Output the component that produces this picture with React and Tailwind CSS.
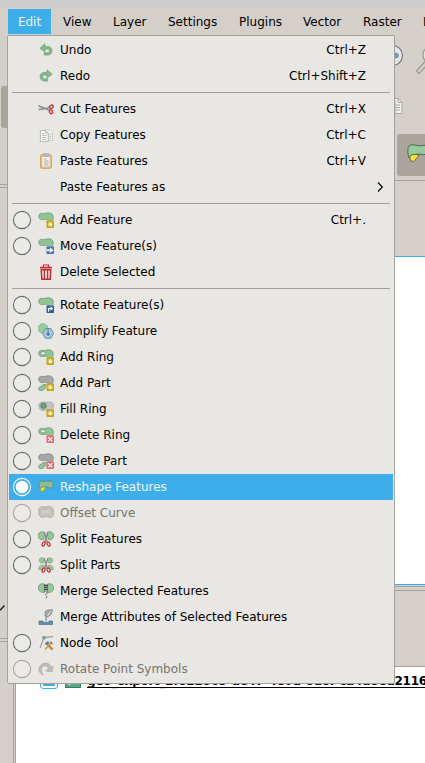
import React from "react";

const MENUS = [
  ["View", "w-[50px]"], ["Layer", "w-[55px]"], ["Settings", "w-[71px]"], ["Plugins", "w-[64px]"],
  ["Vector", "w-[60px]"], ["Raster", "w-[60px]"], ["Database", "w-[78px]"],
];

function Blob({ fill = "#8fc494", stroke = "#6d9372" }) {
  return <path d="M.7 4.100C.7 1.700 2.800.9 5.200 1.400c2 .4 3.500-.8 6-.6 3 .2 4.200 2.200 4.100 4.800-.1 2.500-1.400 3.900-3.400 3.700-2.200-.2-2.200-2-4.300-2-1.800 0-2.500.5-4.200.3C1.600 7.300.7 6.100.7 4.100z" fill={fill} stroke={stroke} strokeWidth=".7" />;
}

function Badge({ kind }) {
  if (kind === "star") return (
    <g><rect x="8.500" y="8.500" width="7.500" height="7.500" rx=".7" fill="#c8a414" />
      <path d="M12.250 9.700v5.100M9.700 12.250h5.100M10.500 10.500l3.500 3.500M14 10.500l-3.500 3.500" stroke="#fffbe0" strokeWidth=".9" /></g>
  );
  if (kind === "cross") return (
    <g><rect x="8.500" y="8.500" width="7.500" height="7.500" rx=".7" fill="#dc6c72" />
      <path d="M10.200 10.200l4.100 4.100M14.300 10.200l-4.100 4.100" stroke="#fff" strokeWidth="1.200" /></g>
  );
  if (kind === "arrow") return (
    <g><rect x="8.500" y="8.500" width="7.500" height="7.500" rx=".7" fill="#4a72ad" />
      <path d="M8.800 11.200h3.200V9.200l3.600 3-3.600 3v-2H8.800z" fill="#e9f1fb" /></g>
  );
  return (
    <g><rect x="8.500" y="8.500" width="7.500" height="7.500" rx=".7" fill="#2f5ea3" />
      <path d="M10.500 14.800v-3.200h3M12.500 10l1.800 1.600-1.800 1.600" fill="none" stroke="#fff" strokeWidth="1.100" /></g>
  );
}

function PartShapes() {
  return (
    <g>
      <Blob fill="#a5a7a4" stroke="#808080" />
      <path d="M7.500 9.300c.4 3.700-1.300 6.300-4.300 6.300-3 0-3.300-2.700-1-3.900 1.800-.8 2.600-2.600 5.300-2.400z" fill="#8fc494" stroke="#648568" strokeWidth=".7" />
    </g>
  );
}

function Wings() {
  return (
    <g fill="#93ca98" stroke="#648568" strokeWidth=".7">
      <path d="M7 1.600C4.500-.1.500.7.400 4.300c-.1 3.700 2.800 5.200 5.300 4z" />
      <path d="M9 1.600c2.500-1.700 6.500-.9 6.600 2.700.1 3.700-2.800 5.200-5.300 4z" />
    </g>
  );
}

function RedBlades() {
  return (
    <g fill="none">
      <path d="M6.200 1.500l2.900 9M9.800 1.500l-2.900 9" stroke="#858585" strokeWidth="1.200" />
      <ellipse cx="5.600" cy="13" rx="1.300" ry="2.300" transform="rotate(25 5.600 13)" stroke="#c22b35" strokeWidth="1.200" />
      <ellipse cx="10.600" cy="13" rx="1.300" ry="2.300" transform="rotate(-25 10.600 13)" stroke="#c22b35" strokeWidth="1.200" />
    </g>
  );
}

const undoShape = "M1.800 6.200L7 1.800V4.500h2.700c2.600 0 4.300 1.700 4.300 4.200 0 2.700-2 4.400-5 4.400H6.300v-2.300H9c1.500 0 2.400-.7 2.400-1.900 0-1.200-.8-1.800-2-1.800H7v3z";

const ICONS = {
  undo: <path d={undoShape} fill="#85b98a" stroke="#6fa274" strokeWidth=".7" />,
  redo: <path d={undoShape} transform="translate(16 0) scale(-1 1)" fill="#85b98a" stroke="#6fa274" strokeWidth=".7" />,
  cut: (
    <g fill="none">
      <path d="M.5 4.700l10.500 4.400M.5 8.700l10.500-2" stroke="#8b8b89" strokeWidth="1.500" />
      <ellipse cx="13.300" cy="5.700" rx="2" ry="1.500" transform="rotate(-25 13.300 5.700)" stroke="#bf3e46" strokeWidth="1.400" />
      <ellipse cx="13" cy="10.800" rx="1.500" ry="2" transform="rotate(-20 13 10.800)" stroke="#bf3e46" strokeWidth="1.400" />
    </g>
  ),
  copy: (
    <g strokeWidth=".8">
      <path d="M7 2.500h5l2.500 2.500v8.500H7z" fill="#efefed" stroke="#c8c8c6" />
      <path d="M2.400 3.500h5.200l2.700 2.700v8.300H2.400z" fill="#f7f7f5" stroke="#aaa" />
      <path d="M7.600 3.500v2.700h2.700M4 6.500h2.500M4 8.500h4.700M4 10.500h4.700M4 12.500h4.700M11.500 7.500h1.800M11.500 9.500h1.800M11.500 11.500h1.800" fill="none" stroke="#b0b0ae" />
    </g>
  ),
  paste: (
    <g>
      <rect x="2.600" y="1.800" width="10.800" height="13.500" rx=".7" fill="#dec18a" stroke="#cda666" />
      <path d="M4.400 3.500h7.200v10H4.400z" fill="#f6f5f2" />
      <rect x="5.200" y=".8" width="5.600" height="2.600" fill="#bdb9b0" stroke="#999" strokeWidth=".5" />
      <path d="M6 6h2.500M6 8h4.500M6 10h4.500M6 12h4.500" stroke="#a7a7a7" />
    </g>
  ),
  add: <g><Blob /><Badge kind="star" /></g>,
  move: <g><Blob /><Badge kind="arrow" /></g>,
  trash: (
    <g fill="none" stroke="#c32b2f">
      <path d="M2 3.600h12" strokeWidth="1.700" /><path d="M5.500 3V1h5v2" strokeWidth="1.100" />
      <path d="M3.300 5.800h9.400l-.5 9.400H3.800z" strokeWidth="1.500" />
      <path d="M6.400 6v9M9.600 6v9" strokeWidth="1.300" />
    </g>
  ),
  rotate: <g><Blob /><Badge kind="turn" /></g>,
  simplify: (
    <g>
      <path d="M.6 5.200C.2 2 2.800.4 5.500.8c3 .4 5 3 4 5.700-1 2.800-4.700 4.500-7.100 3C.4 8.200 1 7 .6 5.200z" fill="#98cf9d" stroke="#73a878" strokeWidth=".8" />
      <path d="M7.300 5.500h5.600l2.700 4.900-2.700 4.900H7.300L4.600 10.400z" fill="#a6c8df" stroke="#53809f" strokeWidth=".8" />
      <path d="M10.100 6v5.500M9 10.500h2.200l-1.100 2.200z" stroke="#376485" strokeWidth=".8" fill="#376485" />
    </g>
  ),
  ring: <g><Blob /><ellipse cx="5" cy="4.300" rx="2.500" ry="1.700" fill="#f0f1ed" stroke="#648568" strokeWidth=".7" /><Badge kind="star" /></g>,
  part: <g><PartShapes /><Badge kind="star" /></g>,
  fill: (
    <g>
      <path d="M1 5C.6 2 3 .8 5.500 1.200h7c2.600 0 3 1.700 2.800 4.300-.1 2.500-1 4-3.200 3.700-2-.4-4-.7-6 .1C3 10.300 1.300 8.300 1 5z" fill="#c3c4c1" stroke="#999" strokeWidth=".7" />
      <circle cx="5.500" cy="4.800" r="2.800" fill="#69a477" stroke="#53735a" strokeWidth=".7" /><Badge kind="star" />
    </g>
  ),
  deleteRing: <g><Blob /><ellipse cx="5" cy="4.300" rx="2.500" ry="1.700" fill="#f0f1ed" stroke="#648568" strokeWidth=".7" /><Badge kind="cross" /></g>,
  deletePart: <g><PartShapes /><Badge kind="cross" /></g>,
  reshape: (
    <g>
      <path d="M1.800 8.300l4-1 2.400.7-3.200 4.300H3z" fill="#f2dd37" stroke="#9d8e22" strokeWidth=".6" />
      <path d="M.7 5.300C.7 2.500 2.600 1.600 5 2.300c2.500.6 4-.6 6.700-.4 2.800.2 3.900 1.900 3.700 4.300-.2 2.300-1.700 3.200-3.700 2.800-1.900-.5-2.800-1.500-4.700-1.100-1.700.2-3.600-.2-4.600 1.600C1.400 9 .7 7.600.7 5.300z" fill="#86bd96" stroke="#597c64" strokeWidth=".7" />
    </g>
  ),
  offset: (
    <g fill="#cbc7c0" stroke="#aaa69f" strokeWidth=".9">
      <path d="M.7 6C.7 2 3 1.300 6 2c2 .4 3-.7 5.500-.5 3 .2 4 2.500 4 6 0 3.700-1.800 5.800-4 5-1.500-.5-2.500-1.500-5-.7-3.300 1-5.800.2-5.800-5.800z" />
      <path d="M3 6c.2-2 2-2 4-1.500 2 .3 3-.7 4.500-.4 2 .4 1.800 5.600-.3 5.400-1.500-.2-3-1.200-5-.5C4 9.700 2.700 9 3 6z" fill="#d3cfc8" strokeWidth=".5" />
    </g>
  ),
  split: <g><Wings /><RedBlades /></g>,
  splitParts: (
    <g>
      <g fill="#93ca98" stroke="#7b9a7f" strokeWidth=".6">
        <path d="M6.500 1.500C4-.1 1.300.8 1.300 3.300c0 2.500 2 3.300 4.500 2.400zM9.500 1.500c2.500-1.600 5.200-.7 5.200 1.800 0 2.500-2 3.300-4.500 2.400z" />
        <path d="M5.800 8.200C6 11.500 4.300 13.600.7 12.500c-.3-3 1.500-4.700 5.100-4.300zM10.200 8.200c-.2 3.300 1.500 5.400 5.100 4.300.3-3-1.500-4.700-5.100-4.300z" />
      </g>
      <RedBlades />
    </g>
  ),
  merge: (
    <g>
      <path d="M7.500 1.600C4.500-.1.500.7.400 4.600c-.1 4 3.600 5.700 6.800 4.300zM8.500 1.600c3-1.700 7-.9 7.100 3 .1 4-3.600 5.700-6.800 4.300z" fill="#93ca98" stroke="#648568" strokeWidth=".7" />
      <path d="M6.300 1v8.500M9.700 1v8.500" stroke="#777" strokeWidth=".8" />
      <path d="M6 2.500h4M6 4.500h4M6 6.500h4" stroke="#414b43" strokeWidth="1" />
      <path d="M8 9c3 1 1.500 2-.5 2.200-1.500.5 1.500 1.500 1.500 2.600L8 15.600" fill="none" stroke="#888" strokeWidth="1" />
    </g>
  ),
  mergeAttrs: (
    <g>
      <path d="M7.300 2.500L9.500 1l5-.3L13 5.500 9.500 8 7 7z" fill="#aaaaa7" stroke="#777" strokeWidth=".7" />
      <path d="M13 1.800L9.500 7" stroke="#ddd" /><path d="M8 7.500v4.500" stroke="#888" strokeWidth="1.200" />
      <path d="M1 12h4v1.300h6V12h3.500v3.500H1z" fill="#648cac" stroke="#416482" strokeWidth=".6" />
    </g>
  ),
  node: (
    <g>
      <path d="M2 13L6 2.500l9-.8" fill="none" stroke="#858583" strokeWidth=".9" />
      <path d="M4.800 1.500h2.500V4H4.800z" fill="#87bd8c" stroke="#648568" strokeWidth=".6" />
      <path d="M7 14.500l6-6" stroke="#d2a04c" strokeWidth="1.700" /><path d="M10 10l4.600 4.600" stroke="#c78630" strokeWidth="2.200" />
      <path d="M7 8.500l3-2 1.300 1.300L9 10.200zM12.700 6.200v2.300H15" fill="#777" stroke="#777" strokeWidth=".7" />
    </g>
  ),
  rotateSymbols: (
    <path d="M5.500 14C1.500 12.800.3 9.800 1 7 2 3.600 4.700 2 7.600 2c2.900 0 4.800 1.500 5.300 4l2.400-.5-1.300 5.500-6.300-1L10.300 7.800C9.800 5.800 8.600 4.700 7.200 4.700 5 4.800 3.500 6.300 3.500 8.800c0 2.200.8 4 2 5.200z" fill="#bebbb5" stroke="#aeaaa4" strokeWidth=".6" />
  ),
};

const GROUPS = [
  [
    { label: "Undo", icon: "undo", keys: "Ctrl+Z" },
    { label: "Redo", icon: "redo", keys: "Ctrl+Shift+Z" },
  ],
  [
    { label: "Cut Features", icon: "cut", keys: "Ctrl+X" },
    { label: "Copy Features", icon: "copy", keys: "Ctrl+C" },
    { label: "Paste Features", icon: "paste", keys: "Ctrl+V" },
    { label: "Paste Features as", submenu: true },
  ],
  [
    { label: "Add Feature", icon: "add", radio: true, keys: "Ctrl+." },
    { label: "Move Feature(s)", icon: "move", radio: true },
    { label: "Delete Selected", icon: "trash" },
  ],
  [
    { label: "Rotate Feature(s)", icon: "rotate", radio: true },
    { label: "Simplify Feature", icon: "simplify", radio: true },
    { label: "Add Ring", icon: "ring", radio: true },
    { label: "Add Part", icon: "part", radio: true },
    { label: "Fill Ring", icon: "fill", radio: true },
    { label: "Delete Ring", icon: "deleteRing", radio: true },
    { label: "Delete Part", icon: "deletePart", radio: true },
    { label: "Reshape Features", icon: "reshape", radio: true, active: true },
    { label: "Offset Curve", icon: "offset", radio: true, disabled: true },
    { label: "Split Features", icon: "split", radio: true },
    { label: "Split Parts", icon: "splitParts", radio: true },
    { label: "Merge Selected Features", icon: "merge" },
    { label: "Merge Attributes of Selected Features", icon: "mergeAttrs" },
    { label: "Node Tool", icon: "node", radio: true },
    { label: "Rotate Point Symbols", icon: "rotateSymbols", radio: true, disabled: true },
  ],
];

function Radio({ active, disabled }) {
  return (
    <svg viewBox="0 0 20 20" className="size-5">
      <circle cx="10" cy="10" r="8.600" fill={active ? "none" : "#ebeae7"} stroke={active ? "#fff" : disabled ? "#aaa8a4" : "#6b6b6a"} strokeWidth="1.100" />
      {active && <circle cx="10" cy="10" r="6.300" fill="#fff" />}
    </svg>
  );
}

function Item({ label, icon, keys, radio, submenu, active, disabled }) {
  const color = active ? "bg-[#3daee9] text-[#eff6fa]" : disabled ? "text-[#77736e]" : "text-black";
  return (
    <div className={`flex h-[26px] items-center pl-[3px] ${color}`}>
      <div className="w-5 shrink-0">{radio && <Radio active={active} disabled={disabled} />}</div>
      <svg viewBox="0 0 16 16" className="ml-1.5 size-4 shrink-0">{ICONS[icon]}</svg>
      <span className="ml-1.5 flex-1 whitespace-nowrap">{label}</span>
      {keys && <span className="mr-[27px]">{keys}</span>}
      {submenu && <svg viewBox="0 0 8 12" className="mr-[9px] h-3 w-2"><path d="M2 1.500L6.300 6 2 10.500" fill="none" stroke="#111" strokeWidth="1.300" /></svg>}
    </div>
  );
}

function EditMenu() {
  return (
    <div className="absolute left-[7px] top-[35px] w-[388px] rounded-[2px] border border-[#a5a29d] bg-[#e8e7e3] p-px">
      {GROUPS.map((group, i) => (
        <div key={i}>
          {i > 0 && <div className="mx-[3px] mb-[3px] mt-[3px] h-px bg-[#a5a29d]" />}
          {group.map((item) => <Item key={item.label} {...item} />)}
        </div>
      ))}
    </div>
  );
}

function LeftEdge() {
  return (
    <div className="flex w-4 shrink-0 flex-col border-r border-[#a5a29d] pr-px">
      <div className="flex flex-1 flex-col border-r border-[#a5a29d]">
        <div className="ml-px mt-[51px] h-[42px] rounded-[3px] bg-[#a9a59d]" />
        <div className="mt-14 h-1 border-y border-[#a5a29d]" />
        <svg viewBox="0 0 8 10" className="mt-[414px] h-2.5 w-2"><path d="M0 8.200L4.500 3.500" stroke="#111" strokeWidth="1.300" /></svg>
        <div className="mt-[26px] h-1 border-y border-[#a5a29d]" />
      </div>
    </div>
  );
}

function Workspace() {
  return (
    <div className="flex min-w-0 flex-1 flex-col">
      <div className="flex h-[53px] shrink-0 items-start pl-[366px] pt-2">
        <svg viewBox="0 0 24 24" className="size-6 shrink-0">
          <circle cx="10.500" cy="12.500" r="10" fill="#e5e6e7" stroke="#77797b" strokeWidth="1.200" />
          <rect x="4" y="10" width="12.500" height="5" rx="2.500" fill="#6f99c4" stroke="#5f86b0" strokeWidth=".6" />
        </svg>
        <svg viewBox="0 0 19 40" className="h-10 w-[19px] shrink-0">
          <circle cx="26" cy="12" r="9" fill="#e4e3df" stroke="#9b9892" strokeWidth="1.200" />
          <path d="M19 18.500L10.500 28l2.500 2.700 8-8.700" fill="#d4cfc8" stroke="#9b9892" strokeWidth="1.200" />
        </svg>
      </div>
      <div className="h-[46px] shrink-0 pl-[370px] pt-[9px]">
        <svg viewBox="0 0 18 22" className="h-[22px] w-[18px]">
          <path d="M5 1.500h7l4 4v11H5z" fill="#efefed" stroke="#aaa" />
          <path d="M12 1.500v4h4M8 8h6M8 10.500h6M8 13h6" fill="none" stroke="#aaa" /><path d="M0 3h9v16H0z" fill="#fff" stroke="#aaa" />
        </svg>
      </div>
      <div className="h-[46px] shrink-0 pl-[381px]">
        <div className="h-[42px] w-[44px] rounded-[3px] bg-[#a9a59d] pl-2.5 pt-[9px]">
          <svg viewBox="0 0 24 24" className="size-6">
            <path d="M2 12l6-1 4 1.500-5.300 6-3-.8z" fill="#f6e33a" stroke="#555" strokeWidth=".8" />
            <path d="M.8 7.500c0-5 3.200-6.500 7-5.500 4 1.200 7 .5 11 .2 5 0 6 9.300 0 9.300-5 .3-7-.8-10-.3-3 .8-5-.2-6.500 3.800C1.200 13 .8 10.500.8 7.500z" fill="#95cc9b" stroke="#4d6552" />
          </svg>
        </div>
      </div>
      <div className="h-[76px] shrink-0 border-t border-[#a5a29d]" />
      <div className="h-[329px] shrink-0 border-y border-[#3daee9] bg-white" />
      <div className="mt-px h-[5px] shrink-0 border-y border-[#a5a29d]" />
      <div className="h-[76px] shrink-0 border-b border-[#a5a29d]" />
      <div className="flex flex-1 items-start overflow-hidden bg-white pl-6 pt-1">
        <div className="size-[18px] shrink-0 rounded-[3px] border border-[#3daee9] p-0.5"><div className="size-full bg-[#3daee9]" /></div>
        <div className="ml-[7px] mt-px size-4 shrink-0 border border-[#3e7c62] bg-[#55a985]"><svg viewBox="0 0 14 14" className="size-full"><path d="M3 12L11 3" stroke="#d8e9e0" strokeWidth="1.500" /></svg></div>
        <div className="ml-1.5 mt-[3px] h-[14px] shrink-0 whitespace-nowrap border-b border-black font-bold leading-[14px] tracking-[-0.28px]">geo_export_2f822865-de47-4e0d-8d8f-ca4d8ed2116</div>
      </div>
    </div>
  );
}

export default function App() {
  return (
    <div className="relative flex h-[763px] w-[425px] flex-col overflow-hidden bg-[#d4cfc8] font-['DejaVu_Sans',sans-serif] text-[12px] leading-[14px] text-black">
      <div className="h-2 shrink-0 bg-[#cdcdcd]" />
      <div className="flex h-[27px] shrink-0 items-center pl-2">
        <div className="mr-0.5 flex h-[25px] w-[43px] shrink-0 items-center justify-center bg-[#3daee9] text-[#eff6fa]">Edit</div>
        {MENUS.map(([name, width]) => <div key={name} className={`${width} shrink-0 pl-2.5`}>{name}</div>)}
      </div>
      <div className="flex min-h-0 flex-1"><LeftEdge /><Workspace /></div>
      <EditMenu />
    </div>
  );
}
